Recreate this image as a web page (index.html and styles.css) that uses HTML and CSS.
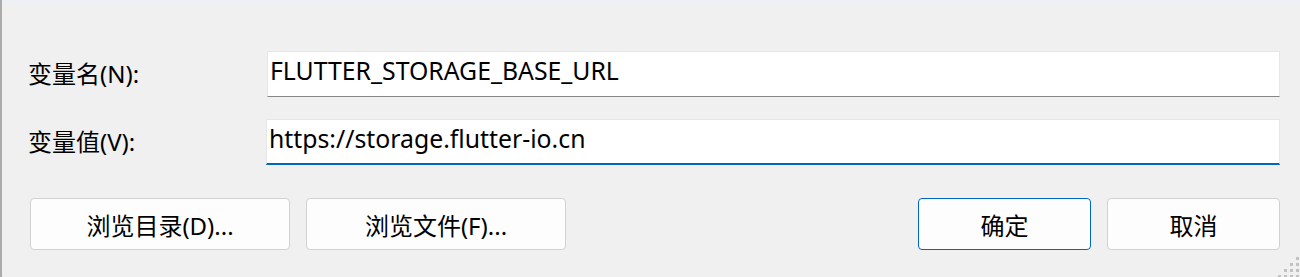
FILE: index.html
```html
<!DOCTYPE html>
<html lang="zh-CN">
<head>
<meta charset="utf-8">
<title>编辑系统变量</title>
<link rel="stylesheet" href="styles.css">
</head>
<body>
<div class="window">
  <div class="topstrip"></div>
  <div class="form">
    <label class="label" for="name">变量名(N):</label>
    <div class="field"><span class="value">FLUTTER_STORAGE_BASE_URL</span></div>
    <label class="label" for="val">变量值(V):</label>
    <div class="field focused"><span class="value">https://storage.flutter-io.cn</span></div>
  </div>
  <div class="buttons">
    <div class="btn wide">浏览目录(D)...</div>
    <div class="btn wide">浏览文件(F)...</div>
    <div class="spacer"></div>
    <div class="btn narrow primary">确定</div>
    <div class="btn narrow">取消</div>
  </div>
  <svg class="grip" width="22" height="22" viewBox="0 0 22 22">
    <rect x="18" y="1" width="3" height="3" fill="#c2c2c2"/>
    <rect x="12" y="7" width="3" height="3" fill="#c2c2c2"/>
    <rect x="18" y="7" width="3" height="3" fill="#c2c2c2"/>
    <rect x="6" y="13" width="3" height="3" fill="#c2c2c2"/>
    <rect x="12" y="13" width="3" height="3" fill="#c2c2c2"/>
    <rect x="18" y="13" width="3" height="3" fill="#c2c2c2"/>
    <rect x="0" y="19" width="3" height="3" fill="#c2c2c2"/>
    <rect x="6" y="19" width="3" height="3" fill="#c2c2c2"/>
    <rect x="12" y="19" width="3" height="3" fill="#c2c2c2"/>
    <rect x="18" y="19" width="3" height="3" fill="#c2c2c2"/>
  </svg>
</div>
</body>
</html>
```

FILE: styles.css
```css
html, body {
  margin: 0;
  padding: 0;
  background: #f0f0f0;
}
body {
  width: 1300px;
  height: 277px;
  overflow: hidden;
  font-family: "Noto Sans", "Noto Sans CJK SC", sans-serif;
  color: #000;
}
.window {
  position: relative;
  box-sizing: border-box;
  height: 287px;
  border-left: 2px solid #ababab;
  border-bottom: 2px solid #ababab;
  border-bottom-left-radius: 12px;
  background: #f0f0f0;
}
.topstrip {
  height: 3px;
  background: #eef0f5;
}
.form {
  display: grid;
  grid-template-columns: 239px 1013px;
  row-gap: 22px;
  padding: 48px 0 0 26px;
  align-items: center;
}
.label {
  font-size: 24px;
  line-height: 30px;
}
.field {
  box-sizing: border-box;
  height: 46px;
  background: #fff;
  border: 1px solid #e6e6e6;
  border-bottom: 1px solid #868686;
  padding: 2px 0 0 2px;
  font-size: 24.8px;
  line-height: 32px;
}
.field.focused {
  border-bottom: 2px solid #0067c0;
  margin-left: -1px;
}
.buttons {
  display: flex;
  gap: 16px;
  padding: 33px 20px 0 28px;
}
.spacer {
  flex: 1;
}
.btn {
  box-sizing: border-box;
  height: 52px;
  background: #fdfdfd;
  border: 1px solid #d2d2d2;
  border-radius: 4px;
  display: flex;
  align-items: center;
  justify-content: center;
  font-size: 24px;
}
.btn.wide {
  width: 260px;
}
.btn.narrow {
  width: 173px;
}
.btn.primary {
  border-color: #0067c0;
}
.grip {
  position: absolute;
  right: 0;
  top: 256px;
}
```
